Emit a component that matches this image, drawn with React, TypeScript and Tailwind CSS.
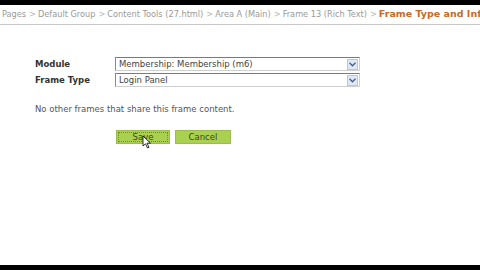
const Chevron = () => (
  <span className="flex h-[11px] w-[11px] items-center justify-center border border-[#b7c7e6] bg-[#dfe8f7]">
    <svg width="7" height="5" viewBox="0 0 7 5">
      <path d="M0.5 0.8 L3.5 3.8 L6.5 0.8" fill="none" stroke="#4d6185" strokeWidth="1.4" />
    </svg>
  </span>
);

const SelectBox = ({ value }: { value: string }) => (
  <div className="flex h-[14px] w-[245px] items-center justify-between border border-[#cfcfcf] border-t-[#7a7a7a] border-l-[#8a8a8a] bg-white pl-[3px] pr-[1px]">
    <span className="text-[8.5px] leading-none text-[#444]">{value}</span>
    <Chevron />
  </div>
);

export default function App() {
  const crumbs = ['Pages', 'Default Group', 'Content Tools (27.html)', 'Area A (Main)', 'Frame 13 (Rich Text)'];
  return (
    <div className="flex h-[270px] w-[480px] flex-col bg-black" style={{ fontFamily: '"DejaVu Sans", Verdana, sans-serif' }}>
      <div className="h-[5px]" />
      <div className="flex flex-1 flex-col overflow-hidden bg-white">
        <div className="flex h-[20px] items-center overflow-hidden whitespace-nowrap border-b border-[#c8c8c8] pl-[2px] text-[8.2px] text-[#9a9a9a]">
          {crumbs.map((c) => (
            <span key={c}>
              {c}
              <span className="pl-[3px] pr-[2px] text-[#b5b5b5]">&gt;</span>
            </span>
          ))}
          <span className="text-[9.5px] font-bold text-[#c86a28]">Frame Type and Information</span>
        </div>

        <div className="pl-[35px] pt-[32px]">
          <div className="flex flex-col gap-[2px]">
            <div className="flex items-center">
              <span className="w-[80px] text-[8.5px] font-bold text-[#333]">Module</span>
              <SelectBox value="Membership: Membership (m6)" />
            </div>
            <div className="flex items-center">
              <span className="w-[80px] text-[8.5px] font-bold text-[#333]">Frame Type</span>
              <SelectBox value="Login Panel" />
            </div>
          </div>

          <p className="mt-[16px] text-[8.5px] text-[#555]">No other frames that share this frame content.</p>

          <div className="ml-[81px] mt-[14px] flex gap-[5px]">
            <button className="relative flex h-[14px] w-[54px] items-center justify-center border border-[#9cbc50] bg-[#a9d04f] text-[8.5px] leading-none text-[#3a4a1a]">
              <span className="absolute inset-[1px] border border-dotted border-[#6f8a30]" />
              Save
              <svg className="absolute left-[25px] top-[4px]" width="10" height="14" viewBox="0 0 10 14">
                <path d="M1 1 L1 11 L3.5 8.8 L5.5 13 L7 12.3 L5 8.2 L8.5 8.2 Z" fill="#fff" stroke="#000" strokeWidth="0.8" />
              </svg>
            </button>
            <button className="flex h-[14px] w-[56px] items-center justify-center border border-[#9cbc50] bg-[#a9d04f] text-[8.5px] leading-none text-[#3a4a1a]">
              Cancel
            </button>
          </div>
        </div>
      </div>
      <div className="h-[5px]" />
    </div>
  );
}
